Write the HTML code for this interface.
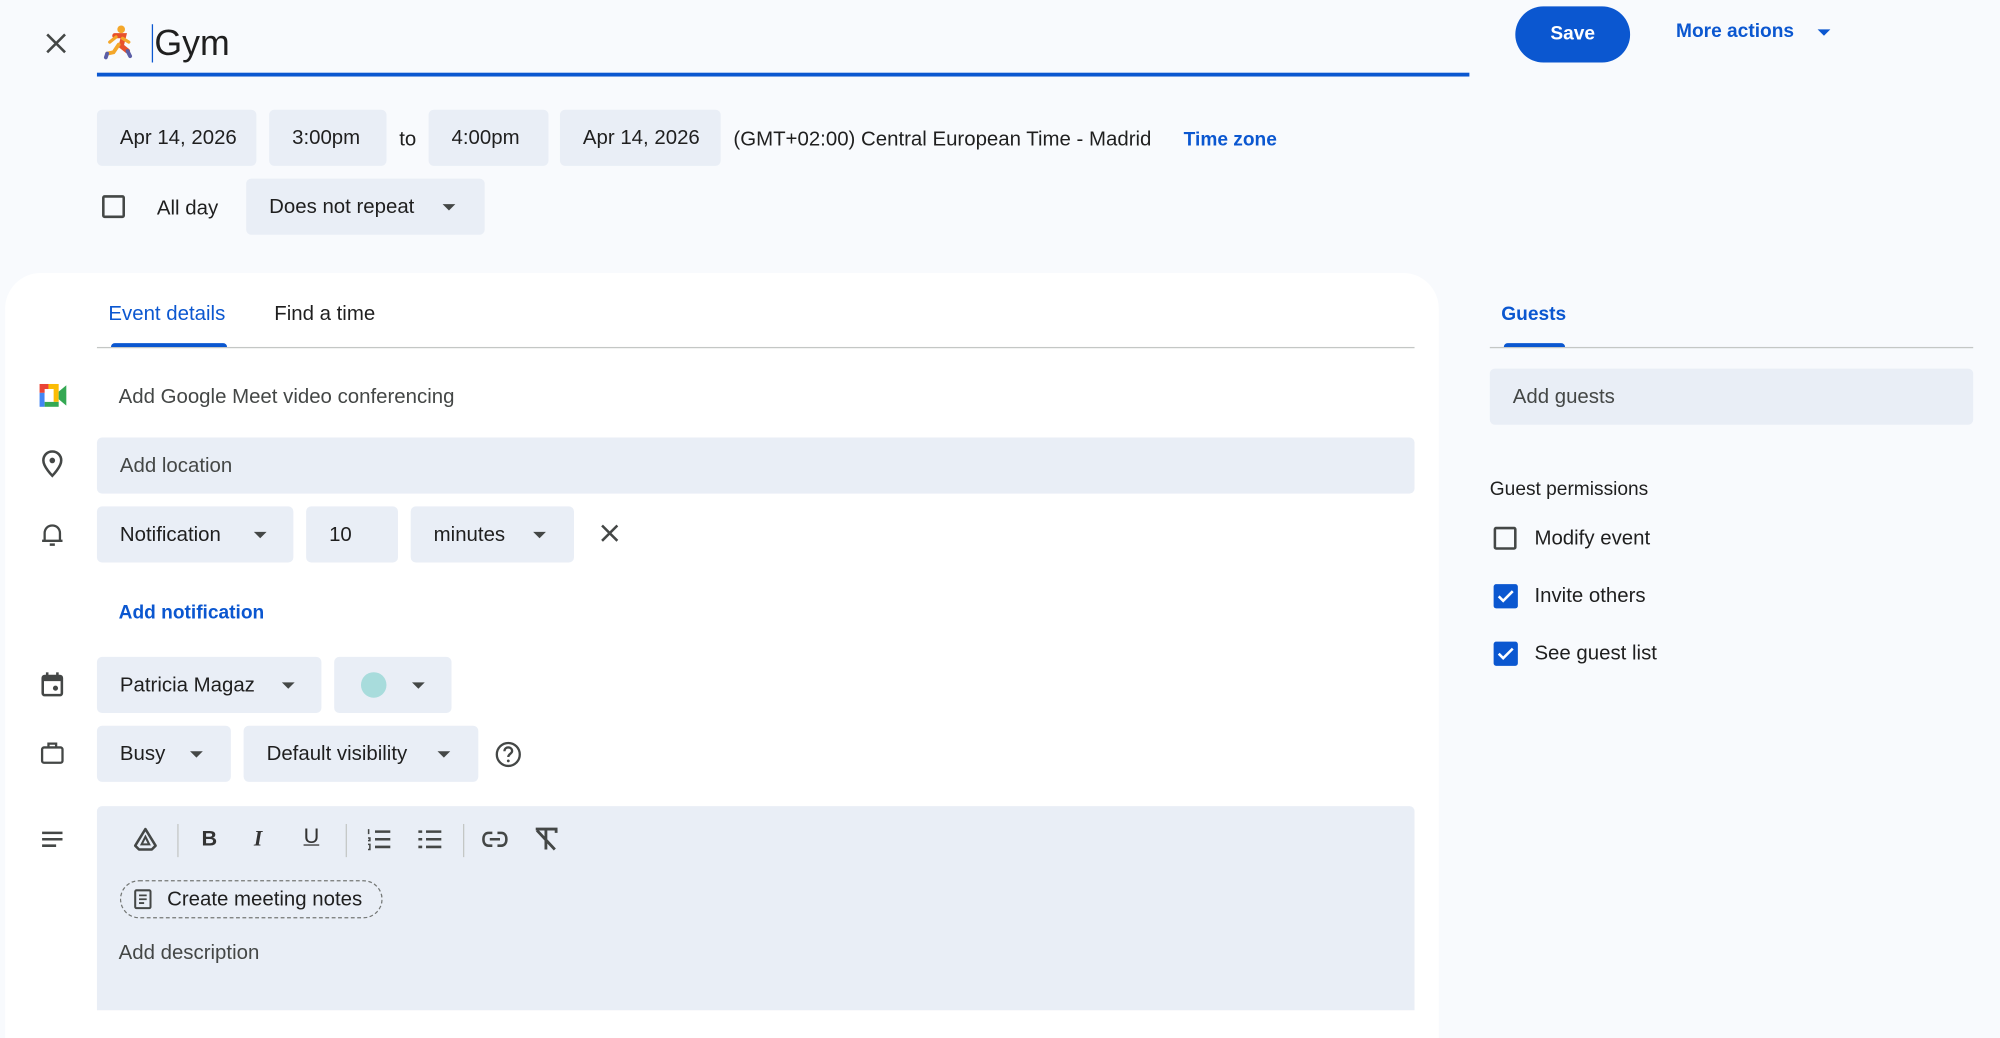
<!DOCTYPE html>
<html><head><meta charset="utf-8">
<style>
*{box-sizing:border-box;margin:0;padding:0}
html,body{width:2000px;height:1000px;overflow:hidden;background:#f8fafd}
#w{position:absolute;left:0;top:0;width:1568px;height:784px;transform:scale(1.27551);transform-origin:0 0;font-family:"Liberation Sans",sans-serif;color:#1f1f1f;font-size:16px}
.a{position:absolute}
.f{position:absolute;background:#e9eef6;border-radius:4px;height:44px;line-height:46px;padding-left:18px;color:#1f1f1f}
.car{position:absolute;top:20px;width:0;height:0;border-left:5px solid transparent;border-right:5px solid transparent;border-top:5px solid #444746}
.ph{color:#444746}
.blue{color:#0b57d0}
.cb{position:absolute;width:18px;height:18px;border:2px solid #444746;border-radius:2px}
.cbc{position:absolute;width:19px;height:19px;background:#0b57d0;border-radius:2px}
svg{position:absolute}
</style></head><body><div id="w">
<!-- top -->
<svg style="left:34px;top:24px" width="20" height="20" viewBox="0 0 20 20"><path d="M3 3L17 17M17 3L3 17" stroke="#444746" stroke-width="2"/></svg>
<svg style="left:81px;top:19px" width="24" height="28" viewBox="0 0 24 28"><circle cx="14" cy="4" r="3" fill="#f4a72a"/><path d="M9 9L16 9L14 17L19 21" fill="none" stroke="#e8512a" stroke-width="4" stroke-linecap="round"/><path d="M12 16L8 22L3 23" fill="none" stroke="#f4a72a" stroke-width="3" stroke-linecap="round"/><path d="M10 10L5 14M15 11L20 14" stroke="#f4a72a" stroke-width="2.5" stroke-linecap="round"/><path d="M19 21L21 25" stroke="#5b5ea6" stroke-width="3" stroke-linecap="round"/><path d="M3 23L2 26" stroke="#5b5ea6" stroke-width="3" stroke-linecap="round"/></svg>
<div class="a" style="left:119px;top:19px;width:1px;height:30px;background:#0b57d0"></div>
<div class="a" style="left:121px;top:15px;font-size:28px;line-height:38px;color:#1f1f1f">Gym</div>
<div class="a" style="left:76px;top:57px;width:1076px;height:3px;background:#0b57d0"></div>
<div class="a" style="left:1188px;top:5px;width:90px;height:44px;border-radius:22px;background:#0b57d0;color:#fff;font-weight:bold;text-align:center;line-height:44px;font-size:15px">Save</div>
<div class="a blue" style="left:1314px;top:16px;font-weight:bold;font-size:15px">More actions</div>
<div class="car" style="left:1425px;top:23px;border-top-color:#0b57d0"></div>

<div class="f" style="left:76px;top:86px;width:125px">Apr 14, 2026</div>
<div class="f" style="left:211px;top:86px;width:92px">3:00pm</div>
<div class="a" style="left:313px;top:101px">to</div>
<div class="f" style="left:336px;top:86px;width:94px">4:00pm</div>
<div class="f" style="left:439px;top:86px;width:126px">Apr 14, 2026</div>
<div class="a" style="left:575px;top:101px">(GMT+02:00) Central European Time - Madrid</div>
<div class="a blue" style="left:928px;top:101px;font-weight:bold;font-size:15px">Time zone</div>

<div class="cb" style="left:80px;top:153px"></div>
<div class="a" style="left:123px;top:155px">All day</div>
<div class="f" style="left:193px;top:140px;width:187px">Does not repeat<div class="car" style="left:154px"></div></div>

<!-- card -->
<div class="a" style="left:4px;top:214px;width:1124px;height:600px;background:#fff;border-radius:28px 28px 0 0"></div>
<div class="a blue" style="left:85px;top:238px">Event details</div>
<div class="a" style="left:215px;top:238px">Find a time</div>
<div class="a" style="left:76px;top:272px;width:1033px;height:1px;background:#c4c7c5"></div>
<div class="a" style="left:87px;top:269px;width:91px;height:3px;background:#0b57d0;border-radius:3px 3px 0 0"></div>

<svg style="left:31px;top:301px" width="22" height="18" viewBox="0 0 22 18"><rect x="0" y="0" width="7" height="7" fill="#ea4335"/><rect x="7" y="0" width="8" height="4" fill="#fbbc04"/><rect x="0" y="7" width="4" height="11" fill="#4285f4"/><rect x="4" y="14" width="11" height="4" fill="#34a853"/><rect x="11" y="4" width="4" height="10" fill="#fbbc04"/><path d="M15 6L21 1V17L15 12Z" fill="#34a853"/><rect x="4" y="4" width="7" height="10" fill="#fff"/></svg>
<div class="a ph" style="left:93px;top:303px">Add Google Meet video conferencing</div>

<svg style="left:31px;top:352px" width="20" height="24" viewBox="0 0 20 24"><path d="M10 2C6 2 3 5 3 9C3 14 10 21 10 21C10 21 17 14 17 9C17 5 14 2 10 2Z" fill="none" stroke="#444746" stroke-width="2"/><circle cx="10" cy="9" r="2.2" fill="#444746"/></svg>
<div class="f ph" style="left:76px;top:343px;width:1033px">Add location</div>

<svg style="left:32px;top:409px" width="18" height="20" viewBox="0 0 18 20"><path d="M3 15V9C3 5.5 5.5 3 9 3C12.5 3 15 5.5 15 9V15H3Z M1 15H17" fill="none" stroke="#444746" stroke-width="1.8"/><path d="M7 18H11" stroke="#444746" stroke-width="2"/></svg>
<div class="f" style="left:76px;top:397px;width:154px">Notification<div class="car" style="left:123px"></div></div>
<div class="f" style="left:240px;top:397px;width:72px">10</div>
<div class="f" style="left:322px;top:397px;width:128px">minutes<div class="car" style="left:96px"></div></div>
<svg style="left:470px;top:410px" width="16" height="16" viewBox="0 0 16 16"><path d="M2 2L14 14M14 2L2 14" stroke="#444746" stroke-width="2"/></svg>
<div class="a blue" style="left:93px;top:472px;font-weight:bold;font-size:15px">Add notification</div>

<svg style="left:32px;top:527px" width="18" height="20" viewBox="0 0 18 20"><rect x="1.5" y="3" width="15" height="15" rx="1.5" fill="none" stroke="#444746" stroke-width="2"/><rect x="1.5" y="3" width="15" height="4" fill="#444746"/><rect x="4" y="0" width="2" height="4" fill="#444746"/><rect x="12" y="0" width="2" height="4" fill="#444746"/><circle cx="11.5" cy="12.5" r="2" fill="#444746"/></svg>
<div class="f" style="left:76px;top:515px;width:176px">Patricia Magaz<div class="car" style="left:145px"></div></div>
<div class="f" style="left:262px;top:515px;width:92px"><div class="a" style="left:21px;top:12px;width:20px;height:20px;border-radius:50%;background:#a8dcdc"></div><div class="car" style="left:61px"></div></div>

<svg style="left:31px;top:580px" width="20" height="20" viewBox="0 0 20 20"><rect x="2" y="6" width="16" height="12" rx="1.5" fill="none" stroke="#444746" stroke-width="1.8"/><path d="M7 6V3H13V6" fill="none" stroke="#444746" stroke-width="1.8"/></svg>
<div class="f" style="left:76px;top:569px;width:105px">Busy<div class="car" style="left:73px"></div></div>
<div class="f" style="left:191px;top:569px;width:184px">Default visibility<div class="car" style="left:152px"></div></div>
<svg style="left:388px;top:581px" width="21" height="21" viewBox="0 0 21 21"><circle cx="10.5" cy="10.5" r="9" fill="none" stroke="#444746" stroke-width="1.8"/><path d="M7.5 8C7.5 6 9 5 10.5 5C12 5 13.5 6 13.5 7.8C13.5 10 10.5 10 10.5 12.5" fill="none" stroke="#444746" stroke-width="1.8"/><circle cx="10.5" cy="15.5" r="1.1" fill="#444746"/></svg>

<svg style="left:32px;top:651px" width="18" height="14" viewBox="0 0 18 14"><path d="M1 2H17M1 7H17M1 12H12" stroke="#444746" stroke-width="2"/></svg>
<div class="a" style="left:76px;top:632px;width:1033px;height:160px;background:#e9eef6;border-radius:4px 4px 0 0"></div>
<svg style="left:103px;top:647px" width="22" height="22" viewBox="0 0 22 22"><path d="M11 3L19 16L16 19H6L3 16Z" fill="none" stroke="#444746" stroke-width="2" stroke-linejoin="round"/><path d="M11 9L14 15H8Z" fill="none" stroke="#444746" stroke-width="1.6"/></svg>
<div class="a" style="left:139px;top:646px;width:1px;height:26px;background:#c4c7c5"></div>
<div class="a" style="left:158px;top:648px;font-weight:bold;font-size:17px;color:#333">B</div>
<div class="a" style="left:199px;top:648px;font-weight:bold;font-style:italic;font-size:17px;font-family:'Liberation Serif',serif;color:#333">I</div>
<div class="a" style="left:238px;top:646px;font-size:17px;text-decoration:underline;color:#333">U</div>
<div class="a" style="left:271px;top:646px;width:1px;height:26px;background:#c4c7c5"></div>
<svg style="left:287px;top:649px" width="20" height="18" viewBox="0 0 20 18"><path d="M7 3H19M7 9H19M7 15H19" stroke="#444746" stroke-width="2"/><path d="M2 1V5M1.5 8H3V10H1.5M1.5 13H3V17H1.5" stroke="#444746" stroke-width="1.2" fill="none"/></svg>
<svg style="left:327px;top:649px" width="20" height="18" viewBox="0 0 20 18"><path d="M7 3H19M7 9H19M7 15H19M1 3H4M1 9H4M1 15H4" stroke="#444746" stroke-width="2"/></svg>
<div class="a" style="left:363px;top:646px;width:1px;height:26px;background:#c4c7c5"></div>
<svg style="left:377px;top:651px" width="22" height="14" viewBox="0 0 22 14"><path d="M9 2H6C3.5 2 2 4 2 7C2 10 3.5 12 6 12H9M13 2H16C18.5 2 20 4 20 7C20 10 18.5 12 16 12H13M7 7H15" fill="none" stroke="#444746" stroke-width="2"/></svg>
<svg style="left:418px;top:648px" width="20" height="20" viewBox="0 0 20 20"><path d="M2 2H18V5M10 2V18M3 3L17 18" fill="none" stroke="#444746" stroke-width="2.2"/></svg>
<div class="a" style="left:94px;top:690px;width:206px;height:30px;border:1px dashed #747775;border-radius:15px"></div>
<svg style="left:105px;top:697px" width="14" height="16" viewBox="0 0 14 16"><rect x="1" y="1" width="12" height="14" rx="1" fill="none" stroke="#444746" stroke-width="1.6"/><path d="M4 5H10M4 8H10M4 11H8" stroke="#444746" stroke-width="1.4"/></svg>
<div class="a" style="left:131px;top:697px;color:#1f1f1f">Create meeting notes</div>
<div class="a ph" style="left:93px;top:739px">Add description</div>

<!-- right -->
<div class="a blue" style="left:1177px;top:238px;font-weight:bold;font-size:15px">Guests</div>
<div class="a" style="left:1168px;top:272px;width:379px;height:1px;background:#c4c7c5"></div>
<div class="a" style="left:1179px;top:269px;width:48px;height:3px;background:#0b57d0;border-radius:3px 3px 0 0"></div>
<div class="f ph" style="left:1168px;top:289px;width:379px">Add guests</div>
<div class="a" style="left:1168px;top:375px;color:#1f1f1f;font-size:15px">Guest permissions</div>
<div class="cb" style="left:1171px;top:413px"></div>
<div class="a" style="left:1203px;top:414px">Modify event</div>
<div class="cbc" style="left:1171px;top:458px"><svg style="left:3px;top:4px" width="13" height="11" viewBox="0 0 13 11"><path d="M1 5.5L4.5 9L12 1.5" fill="none" stroke="#fff" stroke-width="2"/></svg></div>
<div class="a" style="left:1203px;top:459px">Invite others</div>
<div class="cbc" style="left:1171px;top:503px"><svg style="left:3px;top:4px" width="13" height="11" viewBox="0 0 13 11"><path d="M1 5.5L4.5 9L12 1.5" fill="none" stroke="#fff" stroke-width="2"/></svg></div>
<div class="a" style="left:1203px;top:504px">See guest list</div>
</div></body></html>
